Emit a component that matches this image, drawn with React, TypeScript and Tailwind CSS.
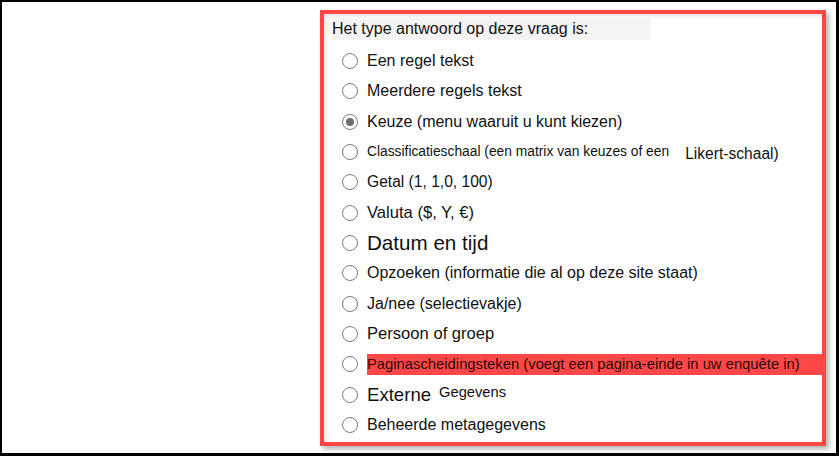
import React from 'react';

type Option = { id: string; label: React.ReactNode; checked?: boolean };

const options: Option[] = [
  { id: 'single', label: <span className="text-[16px]">Een regel tekst</span> },
  { id: 'multi', label: <span className="text-[16px]">Meerdere regels tekst</span> },
  { id: 'choice', label: <span className="text-[16px]">Keuze (menu waaruit u kunt kiezen)</span>, checked: true },
  {
    id: 'rating',
    label: (
      <span className="whitespace-nowrap">
        <span className="text-[13.8px]">Classificatieschaal (een matrix van keuzes of een</span>
        <span className="ml-[16px] text-[15.6px] align-[-3px]">Likert-schaal)</span>
      </span>
    ),
  },
  { id: 'number', label: <span className="text-[15.6px]">Getal (1, 1,0, 100)</span> },
  { id: 'currency', label: <span className="text-[16.6px]">Valuta ($, Y, €)</span> },
  { id: 'date', label: <span className="text-[20.6px]">Datum en tijd</span> },
  { id: 'lookup', label: <span className="text-[16px]">Opzoeken (informatie die al op deze site staat)</span> },
  { id: 'yesno', label: <span className="text-[16px]">Ja/nee (selectievakje)</span> },
  { id: 'person', label: <span className="text-[16.6px]">Persoon of groep</span> },
  {
    id: 'pagebreak',
    label: (
      <span className="block w-[456px] h-[21px] leading-[21px] bg-[#ff4747] text-[14.8px] text-[#2a0a0a] whitespace-nowrap">
        Paginascheidingsteken (voegt een pagina-einde in uw enquête in)
      </span>
    ),
  },
  {
    id: 'external',
    label: (
      <span className="whitespace-nowrap">
        <span className="text-[18.6px]">Externe</span>
        <span className="ml-[8px] text-[14.7px] align-[4px]">Gegevens</span>
      </span>
    ),
  },
  { id: 'managed', label: <span className="text-[16px]">Beheerde metagegevens</span> },
];

function Radio({ checked }: { checked?: boolean }) {
  return (
    <span className="flex h-[16px] w-[16px] shrink-0 items-center justify-center rounded-full border-[1.5px] border-[#7c7c7c] bg-white">
      {checked && <span className="h-[8px] w-[8px] rounded-full bg-[#6e6e6e]" />}
    </span>
  );
}

export default function App() {
  return (
    <div
      className="h-[456px] w-[839px] border-t-2 border-l-2 border-r-[3px] border-b-[3px] border-black bg-white text-[#111]"
      style={{ fontFamily: '"Liberation Sans", Arial, sans-serif' }}
    >
      <div className="ml-[318px] mt-[8px] h-[436px] w-[506px] border-4 border-[#ff4646] shadow-[3px_3px_5px_rgba(0,0,0,0.3),inset_2px_2px_4px_rgba(0,0,0,0.12)]">
        <div className="ml-[8px] mt-[4px] h-[22px] w-[319px] bg-[#f4f4f4] text-[16px] leading-[22px]">
          Het type antwoord op deze vraag is:
        </div>
        <div className="mt-[6px]">
          {options.map((o) => (
            <div key={o.id} className="flex h-[30.33px] items-center pl-[18px]">
              <Radio checked={o.checked} />
              <div className="ml-[9px] leading-none">{o.label}</div>
            </div>
          ))}
        </div>
      </div>
    </div>
  );
}
